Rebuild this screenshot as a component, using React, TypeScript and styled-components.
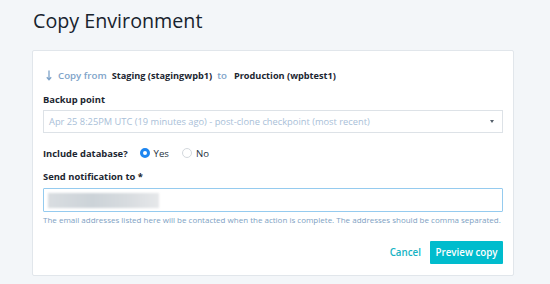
import React from "react";
import styled, { createGlobalStyle } from "styled-components";

const Global = createGlobalStyle`
  html, body { margin: 0; padding: 0; background: #f3f6f9; }
  body { font-family: "Open Sans", "DejaVu Sans", sans-serif; color: #1f2d3a; }
  * { box-sizing: border-box; }
`;

const Page = styled.div`
  width: 550px;
  height: 284px;
  padding: 6px 0 0 32px;
  overflow: hidden;
`;

const Title = styled.h1`
  margin: 0 0 0 1px;
  font-size: 19.7px;
  font-weight: 400;
  line-height: 29px;
  color: #17232e;
`;

const Card = styled.div`
  margin-top: 15px;
  width: 482px;
  height: 226px;
  background: #fff;
  border: 1px solid #e1e6eb;
  border-radius: 2px;
  padding: 15px 10px 0 10px;
  display: flex;
  flex-direction: column;
`;

const CopyLine = styled.div`
  display: flex;
  align-items: center;
  font-size: 9.2px;
  font-weight: 700;
  height: 18px;
`;

const Muted = styled.span<{ $gap: number }>`
  color: #7ea3c9;
  font-weight: 600;
  font-size: 9.7px;
  margin-right: ${(p) => p.$gap}px;
`;

const Strong = styled.span`
  color: #1c2631;
  margin-right: 5px;
`;

const Label = styled.div<{ $mt: number }>`
  margin-top: ${(p) => p.$mt}px;
  font-size: 9.4px;
  font-weight: 700;
  color: #1c2631;
  line-height: 14px;
`;

const Select = styled.div`
  margin-top: 3px;
  height: 23px;
  border: 1px solid #dde2e7;
  display: flex;
  align-items: center;
  justify-content: space-between;
  padding: 0 8px 0 5px;
  font-size: 9.3px;
  color: #a9c0d8;
`;

const Caret = styled.span`
  width: 0;
  height: 0;
  border-left: 2.5px solid transparent;
  border-right: 2.5px solid transparent;
  border-top: 3.5px solid #55606b;
`;

const RadioRow = styled.div`
  margin-top: 10px;
  display: flex;
  align-items: center;
  height: 20px;
  font-size: 9.6px;
`;

const RadioLabel = styled.span`
  font-weight: 700;
  font-size: 9.4px;
  color: #1c2631;
  margin-right: 12px;
`;

const RadioOption = styled.label`
  display: flex;
  align-items: center;
  gap: 4px;
  color: #26323d;
  margin-right: 13px;
`;

const RadioDot = styled.span<{ $on?: boolean }>`
  width: 10px;
  height: 10px;
  border-radius: 50%;
  border: ${(p) => (p.$on ? "3px solid #1e86f0" : "1px solid #d3d8dd")};
  background: #fff;
`;

const Input = styled.div`
  margin-top: 4px;
  height: 24px;
  border: 1.5px solid #95cbef;
  border-radius: 1px;
  padding: 3px 4px;
  display: flex;
  align-items: center;
`;

const Blur = styled.div`
  width: 111px;
  height: 15px;
  background: linear-gradient(90deg, #d9dde1 0%, #ccd3d8 40%, #d7dbdf 70%, #e6e8ea 100%);
  filter: blur(1px);
`;

const Help = styled.div`
  margin-top: 2px;
  font-size: 8px;
  color: #7e9fc3;
  line-height: 12px;
  white-space: nowrap;
`;

const Actions = styled.div`
  margin-top: 15px;
  display: flex;
  justify-content: flex-end;
  align-items: center;
  gap: 9px;
`;

const LinkButton = styled.button`
  background: none;
  border: none;
  padding: 0;
  font-family: inherit;
  font-size: 9.8px;
  font-weight: 600;
  color: #16b3c4;
`;

const Primary = styled.button`
  height: 23px;
  width: 73px;
  padding: 0;
  background: #00bccd;
  border: none;
  border-radius: 1px;
  color: #fff;
  font-family: inherit;
  font-size: 9.8px;
  font-weight: 600;
  white-space: nowrap;
`;

function ArrowDown() {
  return (
    <svg width="6" height="11" viewBox="0 0 6 11" style={{ marginLeft: 3, marginRight: 6 }}>
      <path d="M3 0.5 V9.5 M0.8 7.3 L3 9.7 L5.2 7.3" stroke="#7ea3c9" strokeWidth="1.3" fill="none" />
    </svg>
  );
}

export default function App() {
  return (
    <>
      <Global />
      <Page>
        <Title>Copy Environment</Title>
        <Card>
          <CopyLine>
            <ArrowDown />
            <Muted $gap={5}>Copy from</Muted>
            <Strong>Staging (stagingwpb1)</Strong>
            <Muted $gap={7}>to</Muted>
            <Strong>Production (wpbtest1)</Strong>
          </CopyLine>
          <Label $mt={9}>Backup point</Label>
          <Select>
            <span>Apr 25 8:25PM UTC (19 minutes ago) - post-clone checkpoint (most recent)</span>
            <Caret />
          </Select>
          <RadioRow>
            <RadioLabel>Include database?</RadioLabel>
            <RadioOption>
              <RadioDot $on />
              Yes
            </RadioOption>
            <RadioOption>
              <RadioDot />
              No
            </RadioOption>
          </RadioRow>
          <Label $mt={7}>Send notification to *</Label>
          <Input>
            <Blur />
          </Input>
          <Help>
            The email addresses listed here will be contacted when the action is complete. The addresses should be comma separated.
          </Help>
          <Actions>
            <LinkButton>Cancel</LinkButton>
            <Primary>Preview copy</Primary>
          </Actions>
        </Card>
      </Page>
    </>
  );
}
